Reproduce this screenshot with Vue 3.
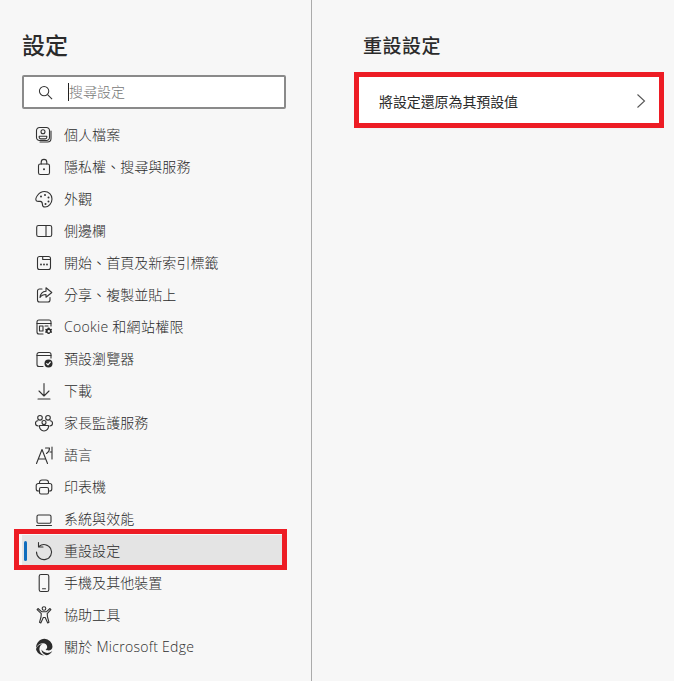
<script setup>
const items = [
  { label: "個人檔案", icon: "profile" },
  { label: "隱私權、搜尋與服務", icon: "lock" },
  { label: "外觀", icon: "palette" },
  { label: "側邊欄", icon: "sidebar" },
  { label: "開始、首頁及新索引標籤", icon: "home" },
  { label: "分享、複製並貼上", icon: "share" },
  { label: "Cookie 和網站權限", icon: "cookie", latin: true },
  { label: "預設瀏覽器", icon: "browser" },
  { label: "下載", icon: "download" },
  { label: "家長監護服務", icon: "family" },
  { label: "語言", icon: "language" },
  { label: "印表機", icon: "printer" },
  { label: "系統與效能", icon: "laptop" },
  { label: "重設設定", icon: "reset", active: true },
  { label: "手機及其他裝置", icon: "phone" },
  { label: "協助工具", icon: "access" },
  { label: "關於 Microsoft Edge", icon: "edge", latin: true }
];
</script>

<template>
  <div class="page">
    <aside class="sidebar">
      <h1 class="sidebar__title">設定</h1>
      <div class="search">
        <svg class="search__icon" viewBox="0 0 16 16" width="15" height="15">
          <circle cx="6.500" cy="6.500" r="5" />
          <path d="M10.200 10.200 15 15" />
        </svg>
        <span class="search__caret"></span>
        <span class="search__text">搜尋設定</span>
      </div>
      <nav class="nav">
        <div
          v-for="item in items"
          :key="item.label"
          class="nav__row"
          :class="{ 'nav__row--active': item.active }"
        >
          <span v-if="item.active" class="nav__bar"></span>
          <svg class="nav__icon" viewBox="0 0 20 20" width="20" height="20">
            <template v-if="item.icon === 'profile'">
              <path d="M5.500 2.500h7a3 3 0 0 1 3 3v7a3 3 0 0 1-3 3h-7a3 3 0 0 1-3-3v-7a3 3 0 0 1 3-3z" />
              <path d="M17 6v7.500a3.500 3.500 0 0 1-3.500 3.500H6" />
              <circle cx="9" cy="6.800" r="2" />
              <path d="M5.200 11.300h7.600v1a1.600 1.600 0 0 1-1.600 1.600H6.800a1.600 1.600 0 0 1-1.600-1.600z" />
            </template>
            <template v-else-if="item.icon === 'lock'">
              <rect x="4.500" y="7" width="11" height="10.500" rx="1.800" />
              <path d="M7.200 7V5.200a2.800 2.800 0 0 1 5.600 0V7" />
              <circle class="fill" cx="10" cy="12.200" r="1" />
            </template>
            <template v-else-if="item.icon === 'palette'">
              <path d="M10.500 2.500c4.200 0 7.500 3.300 7.500 7.500 0 4.300-3.400 8-7 8-2.200 0-2.600-1.500-2.600-2.800 0-1.600-.6-2.600-2-2.800-1.700-.2-3.100.3-4-.6C1.500 10.900 2 8.500 3.600 6.300 5.200 4 7.800 2.500 10.500 2.500z" />
              <circle class="fill" cx="7" cy="7.500" r="1" />
              <circle class="fill" cx="11" cy="6" r="1" />
              <circle class="fill" cx="14.500" cy="8.500" r="1" />
              <circle class="fill" cx="14.500" cy="12.500" r="1" />
              <circle class="fill" cx="11.500" cy="15" r="1" />
            </template>
            <template v-else-if="item.icon === 'sidebar'">
              <rect x="2.700" y="4.500" width="15" height="11" rx="1.800" />
              <path d="M12 4.500v11" />
            </template>
            <template v-else-if="item.icon === 'home'">
              <path d="M3.500 6.500v-1a2 2 0 0 1 2-2h3.200v3h7.800v8a2 2 0 0 1-2 2h-9a2 2 0 0 1-2-2z" />
              <path d="M8.700 3.500h5.800a2 2 0 0 1 2 2v1" />
              <circle class="fill" cx="7" cy="11.500" r=".9" />
              <circle class="fill" cx="10" cy="11.500" r=".9" />
              <circle class="fill" cx="13" cy="11.500" r=".9" />
            </template>
            <template v-else-if="item.icon === 'share'">
              <path d="M8 4H5.500a2 2 0 0 0-2 2v9a2 2 0 0 0 2 2h8.500a2 2 0 0 0 2-2v-2.500" />
              <path d="M12 2.800 17.800 7.500 12 12.200V9.500c-2.800 0-4.600.8-6 3 .3-3.500 2.400-6 6-6.300z" />
            </template>
            <template v-else-if="item.icon === 'cookie'">
              <path d="M9 17H5a2 2 0 0 1-2-2V5a2 2 0 0 1 2-2h10a2 2 0 0 1 2 2v4" />
              <path d="M3 6.500h14" />
              <rect x="5.500" y="9" width="3.500" height="5" />
              <path d="M11 9h3" />
              <path class="solid" d="M14.500 10.500l1 .2.600 1.200 1.300-.2.700 1.100-.8 1 .8 1.100-.7 1.100-1.300-.2-.6 1.200h-1.800l-.6-1.200-1.300.2-.7-1.100.8-1.100-.8-1 .7-1.100 1.300.2.600-1.200zM14.800 13a1.200 1.200 0 1 0 0 2.400 1.200 1.200 0 0 0 0-2.400z" />
            </template>
            <template v-else-if="item.icon === 'browser'">
              <path d="M9 17.500H5a2 2 0 0 1-2-2v-10a2 2 0 0 1 2-2h10a2 2 0 0 1 2 2V9" />
              <path d="M3 6.500h14" />
              <circle class="solid" cx="14.500" cy="14.500" r="4" />
              <path class="check" d="M12.700 14.600l1.300 1.200 2.300-2.600" />
            </template>
            <template v-else-if="item.icon === 'download'">
              <path d="M10 2.500v12.500M5 10l5 5 5-5M4 18h12" />
            </template>
            <template v-else-if="item.icon === 'family'">
              <circle cx="6" cy="4.800" r="2.300" />
              <circle cx="14" cy="4.800" r="2.300" />
              <circle cx="10" cy="9.500" r="2" />
              <path d="M3.800 7.800A2.500 2.500 0 0 0 1.500 10.300c0 1.700 1.300 2.700 2.800 2.700" />
              <path d="M16.200 7.800a2.500 2.500 0 0 1 2.300 2.500c0 1.700-1.300 2.700-2.800 2.700" />
              <path d="M5.500 12.500h9c.4 3.200-1.800 5.500-4.500 5.500s-4.900-2.300-4.500-5.500z" />
            </template>
            <template v-else-if="item.icon === 'language'">
              <path d="M2.500 18.500 8 4.500l5.500 14M4.300 14h7.400" />
              <path d="M11.500 3h4c0 2.600-1 4.300-3 5.500M18 2v12M18 7h-2" />
            </template>
            <template v-else-if="item.icon === 'printer'">
              <path d="M5.500 6.500v-1a2.500 2.500 0 0 1 2.500-2.500h4a2.500 2.500 0 0 1 2.500 2.500v1" />
              <path d="M5.500 14H4.200a2 2 0 0 1-2-2V8.500a2 2 0 0 1 2-2h11.600a2 2 0 0 1 2 2V12a2 2 0 0 1-2 2h-1.300" />
              <rect x="5.500" y="10.500" width="9" height="6.500" rx="1.500" />
            </template>
            <template v-else-if="item.icon === 'laptop'">
              <rect x="3" y="6" width="14" height="8.200" rx="1.500" />
              <path d="M2.500 16.500h15" />
            </template>
            <template v-else-if="item.icon === 'reset'">
              <path d="M5 5.500A7.500 7.500 0 1 1 2.500 11" />
              <path d="M4.500 1.500v4.500H9" />
            </template>
            <template v-else-if="item.icon === 'phone'">
              <rect x="5.200" y="1.500" width="9.600" height="17" rx="1.800" />
              <path d="M8.500 15.800h3" />
            </template>
            <template v-else-if="item.icon === 'access'">
              <circle cx="10" cy="3.500" r="1.800" />
              <path d="M4 3.500 7.800 6.800h4.400L16 3.500l.9 1.100-3.700 4 .3 3.400 1.500 5.300-1.300.7-2.500-5.500H9.300l-2.500 5.500-1.300-.7L7 12l.3-3.400-4.200-4z" />
            </template>
            <template v-else-if="item.icon === 'edge'">
              <path class="solid" d="M10.500 1.800a8.200 8.200 0 0 1 8 8c0 2.400-1.900 3.700-4 3.700-1.300 0-2.500-.4-3-.9 1-.7 1.700-1.600 1.700-2.700 0-2.300-1.900-3.700-4-3.700-3 0-5.900 2-7.200 4.800C2.200 5.900 5.800 1.800 10.500 1.800z" />
              <path class="solid" d="M2 12c1-2.800 3.400-5 6.200-5-1.800 1.300-2.800 3.200-2.800 5.200 0 2.900 2.100 5.300 5 6C6.400 18.600 3 16.200 2 12z" />
              <path class="solid" d="M12.700 18.200c-2.500-.3-5.500-2.600-5.100-5.600.7 1.900 2.900 3.300 5.600 3.300 1.900 0 3.800-.6 5.100-1.900-1 2.300-3.100 3.900-5.600 4.200z" />
            </template>
          </svg>
          <span class="nav__label" :class="{ 'nav__label--latin': item.latin }">{{ item.label }}</span>
          <span v-if="item.active" class="mark mark--nav"></span>
        </div>
      </nav>
    </aside>

    <main class="content">
      <h2 class="content__title">重設設定</h2>
      <div class="card">
        <span class="card__label">將設定還原為其預設值</span>
        <svg class="card__chevron" viewBox="0 0 10 16" width="10" height="16">
          <path d="M1.500 1.500 8.500 8l-7 6.500" />
        </svg>
        <span class="mark mark--card"></span>
      </div>
    </main>
  </div>
</template>

<style>
html,
body {
  margin: 0;
  background: #f7f7f7;
}
</style>

<style scoped>
.page {
  display: flex;
  height: 681px;
  overflow: hidden;
  background: #f7f7f7;
  color: #2b2b2b;
  font-family: "Open Sans", "Noto Sans CJK TC", sans-serif;
}

.sidebar {
  box-sizing: border-box;
  width: 312px;
  flex: none;
  padding: 29px 25px 0 22px;
  border-right: 1px solid #ababab;
}

.sidebar__title {
  margin: 0;
  height: 32px;
  font-size: 23px;
  line-height: 32px;
  font-weight: 500;
}

.search {
  box-sizing: border-box;
  display: flex;
  align-items: center;
  height: 34px;
  margin-top: 14px;
  padding-left: 14px;
  background: #fff;
  border: 2px solid #8a8a8a;
  border-radius: 2px;
}

.search__icon {
  fill: none;
  stroke: #333;
  stroke-width: 1.1;
}

.search__caret {
  width: 1px;
  height: 18px;
  margin-left: 15px;
  background: #222;
}

.search__text {
  padding-bottom: 2px;
  font-size: 14px;
  font-weight: 300;
  color: #777;
}

.nav {
  margin-top: 10px;
}

.nav__row {
  position: relative;
  display: flex;
  align-items: center;
  height: 32px;
  padding-left: 12px;
}

.nav__row--active {
  background: #e4e4e4;
}

.nav__bar {
  position: absolute;
  left: 2px;
  top: 6px;
  width: 3px;
  height: 20px;
  border-radius: 2px;
  background: #0f6cbd;
}

.nav__icon {
  flex: none;
  fill: none;
  stroke: #333;
  stroke-width: 1.1;
  stroke-linejoin: round;
  stroke-linecap: round;
}

.nav__icon .fill {
  fill: #333;
  stroke: none;
}

.nav__icon .solid {
  fill: #2b2b2b;
  stroke: none;
  fill-rule: evenodd;
}

.nav__icon .check {
  stroke: #fff;
  stroke-width: 1.2;
}

.nav__label {
  margin-left: 10px;
  font-size: 14px;
  font-weight: 300;
  line-height: 20px;
  letter-spacing: 0.05px;
  white-space: nowrap;
}

.nav__label--latin {
  letter-spacing: 0.28px;
}

.mark {
  position: absolute;
  border: 5px solid #ed1c24;
  pointer-events: none;
}

.mark--nav {
  left: -8px;
  right: -1px;
  top: -6px;
  bottom: -3px;
}

.content {
  flex: 1;
  padding: 32px 14px 0 47px;
  min-width: 0;
}

.content__title {
  margin: 0 0 0 4px;
  height: 28px;
  font-size: 19px;
  line-height: 28px;
  font-weight: 500;
  letter-spacing: 0.5px;
}

.card {
  position: relative;
  display: flex;
  align-items: center;
  justify-content: space-between;
  height: 48px;
  margin-top: 17px;
  padding: 0 14px 0 20px;
  background: #fff;
  box-shadow: 0 1px 4px rgba(0, 0, 0, 0.18);
}

.card__label {
  font-size: 14px;
  font-weight: 400;
  letter-spacing: -0.1px;
}

.card__chevron {
  fill: none;
  stroke: #555;
  stroke-width: 1.1;
}

.mark--card {
  left: -5px;
  right: -4px;
  top: -5px;
  bottom: -3px;
}
</style>
